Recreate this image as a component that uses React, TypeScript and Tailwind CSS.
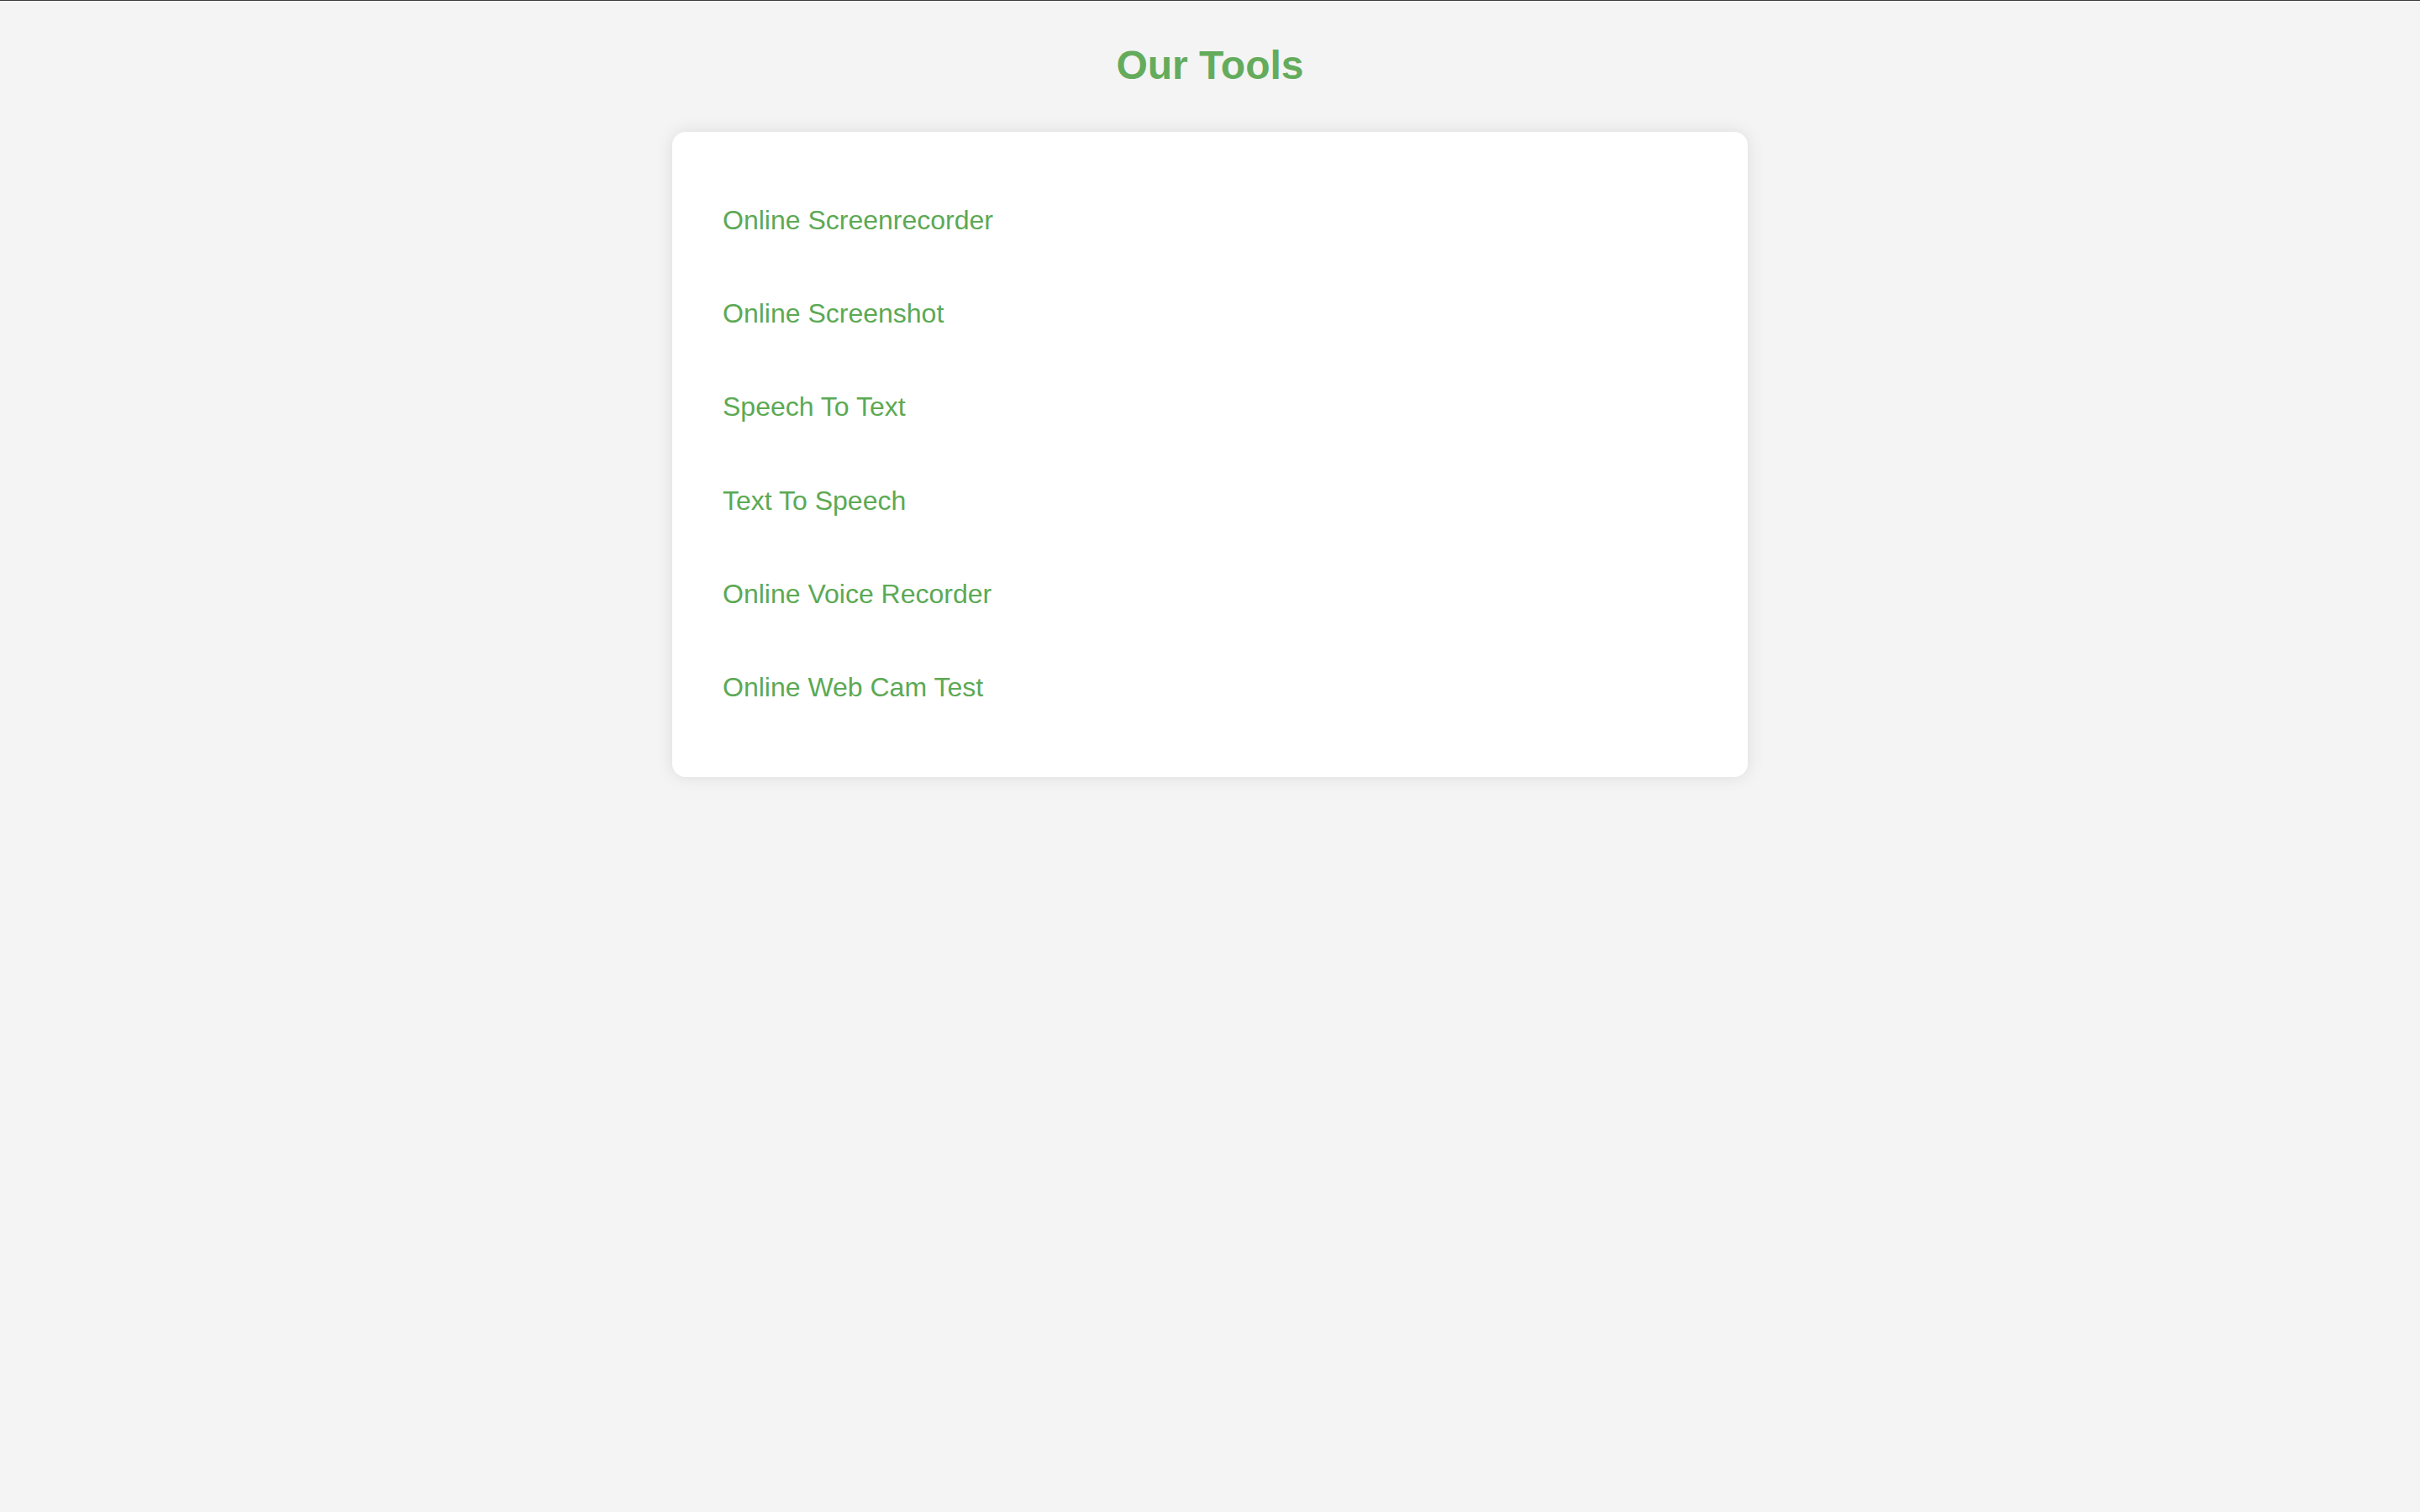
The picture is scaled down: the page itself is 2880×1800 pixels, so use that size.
import React from "react";

const tools = [
  "Online Screenrecorder",
  "Online Screenshot",
  "Speech To Text",
  "Text To Speech",
  "Online Voice Recorder",
  "Online Web Cam Test",
];

const App = () => {
  return (
    <div className="min-h-screen bg-[#f4f4f4] border-t border-[#3a3a3a] font-['Liberation_Sans',Arial,sans-serif]">
      <h1 className="pt-[49px] text-center text-[48px] font-bold leading-[56px] text-[#64ac5c]">
        Our Tools
      </h1>

      <main className="w-[1280px] mx-auto mt-[51px] bg-white rounded-2xl shadow-[0_0_20px_rgba(0,0,0,0.1)] px-[60px] pt-[50px] pb-[51px]">
        <ul>
          {tools.map((tool) => (
            <li key={tool} className="py-[37px] text-[32px] leading-[37.2px]">
              <a href="#" className="text-[#5ca954]">
                {tool}
              </a>
            </li>
          ))}
        </ul>
      </main>
    </div>
  );
};

export default App;
